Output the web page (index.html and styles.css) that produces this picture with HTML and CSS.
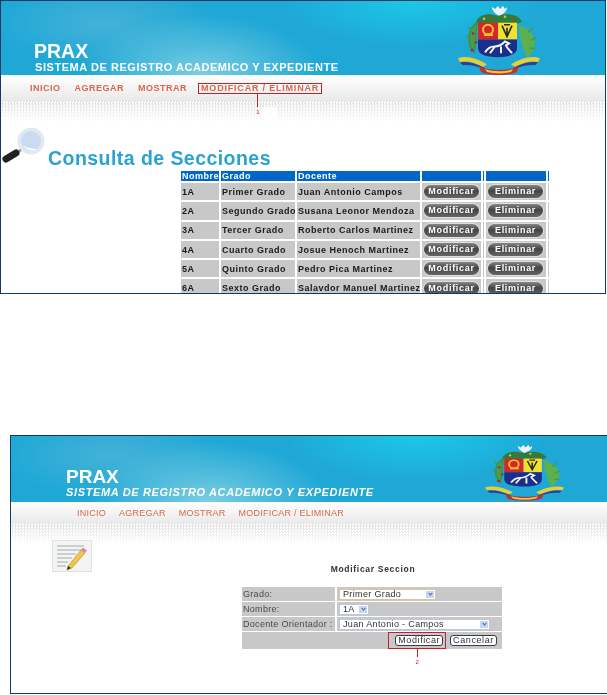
FILE: index.html
```html
<!DOCTYPE html>
<html lang="es">
<head>
    <meta charset="UTF-8">
    <meta name="viewport" content="width=device-width, initial-scale=1.0">
    <title>PRAX - Secciones</title>
    <link rel="stylesheet" href="styles.css">
</head>
<body>

<svg class="defs" width="0" height="0">
    <symbol id="escudo" viewBox="0 0 84 75" preserveAspectRatio="none">
        <!-- palmas -->
        <path d="M20 22C11 28 9 42 17 52C19 45 19 30 20 22Z" fill="#4f9a4a" stroke="#3f8f45" stroke-width="1.5"/>
        <path d="M62 24C78 30 84 44 70 58C66 48 62 36 62 24Z" fill="#5cb04f"/>
        <path d="M15 30l-4-4M14 38l-5-2M16 46l-5 1M71 32l5-5M74 40l5-3M73 48l5 0" stroke="#4a9a45" stroke-width="1.5"/>
        <circle cx="16" cy="33" r="1.3" fill="#8c2a55"/><circle cx="19" cy="42" r="1.3" fill="#8c2a55"/><circle cx="15" cy="50" r="1.5" fill="#a02a40"/>
        <!-- corona -->
        <path d="M19 21C23 13 32 12 40 15C50 12 61 13 65 21L60 23H24Z" fill="#2f7d3c"/>
        <circle cx="27" cy="18" r="1.3" fill="#d8c23a"/><circle cx="34" cy="16" r="1.3" fill="#c0392b"/><circle cx="48" cy="16" r="1.3" fill="#d8c23a"/><circle cx="56" cy="18" r="1.3" fill="#c0392b"/>
        <!-- cornucopias -->
        <path d="M42 15C37 12 35 9 35 6L38 8L41 5L43 8L46 5L48 8L50 6C50 10 47 13 42 15Z" fill="#eef2f2"/>
        <!-- escudo -->
        <rect x="21" y="22" width="20" height="17" fill="#d8242a"/>
        <rect x="41" y="22" width="19" height="17" fill="#f3e02c"/>
        <path d="M21 39H60V48C60 54 52 57 41 57C29 57 21 54 21 48Z" fill="#1a2f8c"/>
        <circle cx="31" cy="29" r="5" fill="none" stroke="#e8c22a" stroke-width="2"/>
        <rect x="27" y="33" width="9" height="2.5" fill="#e8c22a"/>
        <path d="M45 25L50 36L55 25M50 27V36M47 24H53" fill="none" stroke="#2c2a1e" stroke-width="1.6"/>
        <path d="M28 52C31 48 33 46 38 46C42 46 45 44 48 41L52 43L49 45C50 48 53 50 55 53M38 46L33 53M44 46L44 53" fill="none" stroke="#f3f5f5" stroke-width="2"/>
        <!-- cintas -->
        <path d="M1 58C10 55 20 58 30 64L26 67C18 62 9 60 3 62Z" fill="#e4cf38"/>
        <path d="M3 62C10 61 18 63 26 67L30 70C20 66 12 64 6 65Z" fill="#2b3f95"/>
        <path d="M83 58C74 55 64 58 54 64L58 67C66 62 75 60 81 62Z" fill="#e4cf38"/>
        <path d="M81 62C74 61 66 63 58 67L54 70C64 66 72 64 78 65Z" fill="#2b3f95"/>
        <path d="M22 66C30 71 54 71 62 66L60 72C52 76 32 76 24 72Z" fill="#b8333d"/>
        <path d="M28 69C36 72 48 72 56 69L54 72C46 74 38 74 30 72Z" fill="#e4cf38"/>
    </symbol>
</svg>

<section class="shot shot-consulta">
    <header class="banner">
        <div class="banner-text">
            <h1>PRAX</h1>
            <p>SISTEMA DE REGISTRO ACADEMICO Y EXPEDIENTE</p>
        </div>
        <svg class="escudo"><use href="#escudo"/></svg>
    </header>
    <nav class="menu">
        <a href="#">INICIO</a>
        <a href="#">AGREGAR</a>
        <a href="#">MOSTRAR</a>
        <a href="#" class="marked">MODIFICAR / ELIMINAR<span class="callout">1</span></a>
    </nav>
    <div class="dots"></div>

    <div class="page-title">
        <svg class="lupa" viewBox="0 0 46 40">
            <circle cx="30" cy="13" r="12.500" fill="#dfe9f4" stroke="#e4e8ec" stroke-width="2"/>
            <circle cx="30" cy="13" r="10" fill="#c9dcef"/>
            <path d="M22 17C25 22 31 24 36 21C31 21 26 20 22 17Z" fill="#fff"/>
            <path d="M20 22L15 25" stroke="#9a9a9a" stroke-width="3"/>
            <path d="M15 25L5 31" stroke="#222" stroke-width="7" stroke-linecap="round"/>
        </svg>
        <h2>Consulta de Secciones</h2>
    </div>

    <table class="secciones">
        <colgroup>
            <col class="c-nombre"><col class="c-grado"><col class="c-docente"><col class="c-accion"><col class="c-hueco"><col class="c-accion2"><col class="c-hueco">
        </colgroup>
        <thead>
            <tr><th>Nombre</th><th>Grado</th><th>Docente</th><th></th><th></th><th></th><th></th></tr>
        </thead>
        <tbody>
            <tr><td>1A</td><td>Primer Grado</td><td>Juan Antonio Campos</td><td><a class="pill" href="#">Modificar</a></td><td></td><td><a class="pill" href="#">Eliminar</a></td><td></td></tr>
            <tr><td>2A</td><td>Segundo Grado</td><td>Susana Leonor Mendoza</td><td><a class="pill" href="#">Modificar</a></td><td></td><td><a class="pill" href="#">Eliminar</a></td><td></td></tr>
            <tr><td>3A</td><td>Tercer Grado</td><td>Roberto Carlos Martinez</td><td><a class="pill" href="#">Modificar</a></td><td></td><td><a class="pill" href="#">Eliminar</a></td><td></td></tr>
            <tr><td>4A</td><td>Cuarto Grado</td><td>Josue Henoch Martinez</td><td><a class="pill" href="#">Modificar</a></td><td></td><td><a class="pill" href="#">Eliminar</a></td><td></td></tr>
            <tr><td>5A</td><td>Quinto Grado</td><td>Pedro Pica Martinez</td><td><a class="pill" href="#">Modificar</a></td><td></td><td><a class="pill" href="#">Eliminar</a></td><td></td></tr>
            <tr><td>6A</td><td>Sexto Grado</td><td>Salavdor Manuel Martinez</td><td><a class="pill" href="#">Modificar</a></td><td></td><td><a class="pill" href="#">Eliminar</a></td><td></td></tr>
        </tbody>
    </table>
</section>

<section class="shot shot-modificar">
    <header class="banner">
        <div class="banner-text">
            <h1>PRAX</h1>
            <p>SISTEMA DE REGISTRO ACADEMICO Y EXPEDIENTE</p>
        </div>
        <svg class="escudo"><use href="#escudo"/></svg>
    </header>
    <nav class="menu">
        <a href="#">INICIO</a>
        <a href="#">AGREGAR</a>
        <a href="#">MOSTRAR</a>
        <a href="#">MODIFICAR / ELIMINAR</a>
    </nav>
    <div class="dots"></div>

    <div class="form-area">
        <svg class="nota" viewBox="0 0 40 32">
            <rect x="0.5" y="0.5" width="39" height="31" fill="#f3f5f5" stroke="#dfe2e2"/>
            <path d="M5 6H32M5 10H30M5 14H24M5 18H20M5 22H16M5 26H14" stroke="#a5a9a9" stroke-width="1"/>
            <path d="M16 26L29 10L33 13L20 28L15 30Z" fill="#efc64a" stroke="#b98f2a" stroke-width="0.6"/>
            <path d="M29 10L31 7.500L35 10.500L33 13Z" fill="#dd88b0"/>
            <path d="M15 30L16 26L19 28Z" fill="#333"/>
        </svg>
        <div class="form-box">
            <h3>Modificar Seccion</h3>
            <table class="form-table">
                <colgroup><col class="c-lbl"><col></colgroup>
                <tr>
                    <td class="lbl">Grado:</td>
                    <td><span class="combo combo-focus combo-grado">Primer Grado<i class="arrow"></i></span></td>
                </tr>
                <tr>
                    <td class="lbl">Nombre:</td>
                    <td><span class="combo combo-nombre">1A<i class="arrow"></i></span></td>
                </tr>
                <tr>
                    <td class="lbl">Docente Orientador :</td>
                    <td><span class="combo combo-docente">Juan Antonio - Campos<i class="arrow"></i></span></td>
                </tr>
                <tr>
                    <td colspan="2" class="acciones">
                        <span class="marked-btn"><button type="button" class="btn-modificar">Modificar</button><span class="callout">2</span></span>
                        <button type="button">Cancelar</button>
                    </td>
                </tr>
            </table>
        </div>
    </div>
</section>

</body>
</html>
```

FILE: styles.css
```css
body {
    font-family: "Liberation Sans", Arial, sans-serif;
    margin: 0;
    padding: 0;
    background: #fff;
}

.defs {
    position: absolute;
}

a {
    text-decoration: none;
}

.shot {
    box-sizing: border-box;
    overflow: hidden;
    border: 1px solid #0d3a66;
    background: #fff;
    filter: blur(0.3px);
}

.shot-consulta {
    width: 606px;
    height: 294px;
}

.shot-modificar {
    width: 598px;
    height: 259px;
    margin: 141px 0 0 10px;
}

/* banner */
.banner {
    display: flex;
    justify-content: space-between;
    box-sizing: border-box;
    background:
        radial-gradient(ellipse 120px 60px at 33% 100%, #7ccde2, transparent),
        radial-gradient(ellipse 130px 45px at 68% 0, #1bc8e8, transparent),
        radial-gradient(ellipse 110px 40px at 17% 30%, #45b2d8, transparent),
        #1fa8d6;
    color: #fff;
}

.shot-consulta .banner {
    height: 74px;
    padding: 0 64px 0 33px;
}

.shot-modificar .banner {
    height: 66px;
    padding: 5px 42px 0 55px;
}

.banner-text {
    align-self: flex-end;
}

.banner h1 {
    margin: 0;
    font-size: 19px;
    line-height: 19px;
}

.banner p {
    margin: 0;
    font-size: 11px;
    font-weight: bold;
    line-height: 13px;
    white-space: nowrap;
}

.shot-consulta .banner h1 {
    font-size: 19.500px;
}

.shot-consulta .banner-text {
    padding-bottom: 1px;
}

.shot-consulta .banner p {
    letter-spacing: 0.55px;
    padding-left: 1px;
}

.shot-modificar .banner-text {
    padding-bottom: 3px;
}

.shot-modificar .banner p {
    font-style: italic;
    letter-spacing: 0.65px;
}

.shot-consulta .escudo {
    width: 84px;
    height: 74px;
}

.shot-modificar .escudo {
    width: 81px;
    height: 60px;
}

/* menu */
.menu {
    display: flex;
    align-items: center;
    background: linear-gradient(#fff, #e9e9e9);
}

.menu a {
    color: #d9664a;
    font-size: 9px;
    font-weight: bold;
    letter-spacing: 0.5px;
    white-space: nowrap;
}

.shot-consulta .menu {
    height: 26px;
    padding-left: 29px;
    gap: 14px;
}

.shot-modificar .menu {
    height: 21px;
    padding-left: 66px;
    gap: 13px;
}

.shot-modificar .menu a {
    font-weight: normal;
    color: #d4694c;
    letter-spacing: 0.25px;
}

.menu .marked {
    position: relative;
    margin-left: -3px;
    padding: 0 2px;
    border: 1px solid #c8202a;
    line-height: 9px;
    letter-spacing: 0.8px;
}

.callout {
    position: absolute;
    left: 47%;
    top: 100%;
    color: #c8202a;
    font-size: 6px;
    font-weight: normal;
    line-height: 7px;
    letter-spacing: 0;
}

.callout::before {
    content: "";
    display: block;
    width: 1px;
    height: 14px;
    margin: 0 0 2px 1px;
    background: #c8202a;
}

/* trozo blanco junto al numero */
.marked .callout::after {
    content: "";
    position: absolute;
    left: 5px;
    top: 14px;
    width: 16px;
    height: 12px;
    background: #fff;
}

.dots {
    height: 21px;
    background:
        linear-gradient(rgba(255, 255, 255, 0.1), #fff),
        repeating-conic-gradient(#dcdcdc 0 25%, #fff 0 50%) 0 0 / 3px 3px;
}

/* consulta */
.page-title {
    display: flex;
    align-items: flex-start;
    height: 47px;
}

.lupa {
    flex: none;
    width: 46px;
    height: 40px;
    margin-top: 6px;
}

.page-title h2 {
    margin: 27px 0 0 1px;
    font-size: 19.500px;
    line-height: 19px;
    letter-spacing: 0.45px;
    color: #29a3cf;
}

.secciones {
    margin: 0 0 0 178px;
    border-spacing: 2px;
    table-layout: fixed;
    width: 372px;
    font-size: 9px;
    font-weight: bold;
    letter-spacing: 0.5px;
    color: #1a1a1a;
}

.c-nombre { width: 38px; }
.c-grado { width: 74px; }
.c-docente { width: 123px; }
.c-accion { width: 59px; }
.c-accion2 { width: 60px; }
.c-hueco { width: 1px; }

.secciones th {
    height: 10px;
    padding: 0 0 0 1px;
    background: #0066cc;
    color: #fff;
    text-align: left;
    line-height: 10px;
    white-space: nowrap;
}

.secciones td {
    height: 17.300px;
    padding: 0 0 0 1px;
    background: #c8c8c8;
    white-space: nowrap;
    overflow: hidden;
}

.pill {
    display: block;
    width: 55px;
    height: 13px;
    margin-left: 1px;
    border-radius: 7px;
    background: linear-gradient(#888, #444 45%, #666);
    box-shadow: 0 0 0 1px #dedede;
    color: #fff;
    font-size: 9px;
    line-height: 12px;
    text-align: center;
    letter-spacing: 0.7px;
}

/* formulario */
.form-area {
    display: flex;
    align-items: flex-start;
    padding-left: 41px;
}

.nota {
    width: 40px;
    height: 32px;
    margin-top: -4px;
    flex: none;
}

.form-box {
    width: 260px;
    margin-left: 150px;
}

.form-box h3 {
    margin: 20px 0 13px;
    padding-left: 2px;
    font-size: 8.500px;
    line-height: 10px;
    letter-spacing: 0.7px;
    color: #333;
    text-align: center;
}

.form-table {
    width: 260px;
    table-layout: fixed;
    border-collapse: separate;
    border-spacing: 0 1px;
    margin-top: -1px;
    font-size: 9px;
    letter-spacing: 0.3px;
    color: #4a4a4a;
}

.c-lbl { width: 95px; }

.form-table td {
    height: 14px;
    padding: 0;
    background: #c8c8c8;
}

.form-table .lbl {
    padding-left: 1px;
    border-right: 2px solid #fff;
    white-space: nowrap;
}

.combo {
    display: flex;
    justify-content: space-between;
    align-items: center;
    box-sizing: border-box;
    height: 11px;
    margin-left: 2px;
    padding: 0 1px 0 3px;
    background: #fff;
    border: 1px solid #b9c8dc;
    font-size: 9px;
    letter-spacing: 0.35px;
    color: #333;
}

.combo-focus { border-color: #d9c78f; }
.combo-grado { width: 97px; }
.combo-nombre { width: 30px; }
.combo-docente { width: 151px; }

.arrow {
    display: flex;
    align-items: center;
    justify-content: center;
    flex: none;
    width: 8px;
    height: 7px;
    background: #c5d6f2;
}

.arrow::before {
    content: "";
    width: 2px;
    height: 2px;
    margin-top: -1px;
    border-right: 1px solid #3d5fa0;
    border-bottom: 1px solid #3d5fa0;
    transform: rotate(45deg);
}

.form-table .acciones {
    height: 17px;
    padding-right: 5px;
    text-align: right;
}

.acciones button {
    box-sizing: border-box;
    height: 11px;
    width: 47px;
    padding: 0;
    background: #fff;
    border: 1px solid #333b55;
    border-radius: 3px;
    font-family: inherit;
    font-size: 9px;
    line-height: 9px;
    letter-spacing: 0.6px;
    color: #333;
    vertical-align: middle;
}

.acciones .btn-modificar {
    width: 48px;
}

.marked-btn {
    position: relative;
    display: inline-block;
    margin-right: 1px;
    padding: 2px 2px 2px 6px;
    border: 1px solid #c8202a;
    line-height: 0;
    vertical-align: middle;
}

.marked-btn .callout::before {
    height: 9px;
}
```
